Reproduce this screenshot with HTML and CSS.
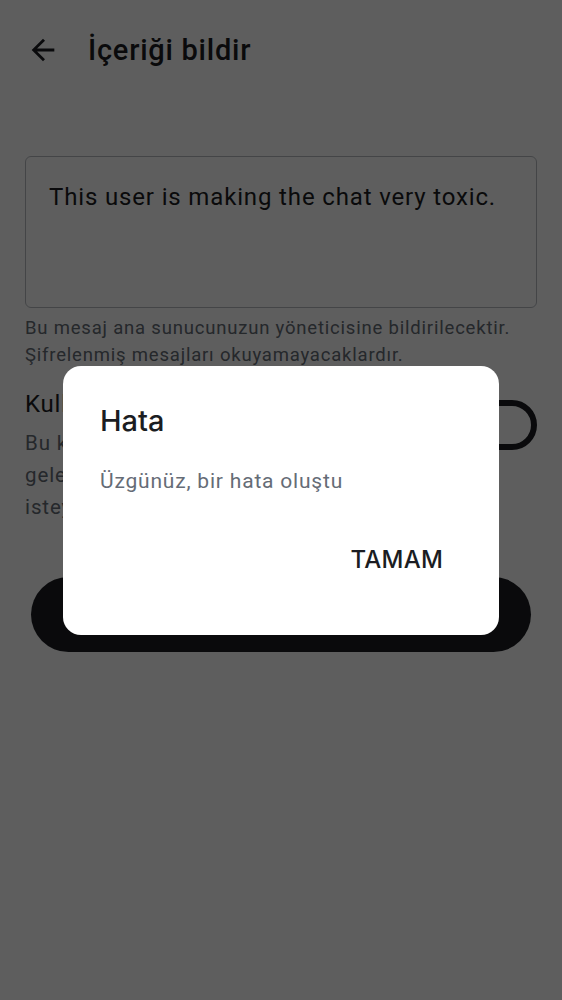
FILE: index.html
```html
<!DOCTYPE html>
<html lang="tr">
<head>
<meta charset="utf-8">
<title>İçeriği bildir</title>
<link rel="stylesheet" href="styles.css">
</head>
<body>
<div class="page">
  <header class="topbar">
    <svg class="back" viewBox="0 0 24 24" width="34" height="34" aria-hidden="true">
      <path d="M20 11H7.83l5.59-5.59L12 4l-8 8 8 8 1.41-1.41L7.83 13H20v-2z" fill="#1b1d22"/>
    </svg>
    <h1 class="title">İçeriği bildir</h1>
  </header>

  <div class="field">This user is making the chat very toxic.</div>
  <p class="helper">Bu mesaj ana sunucunuzun yöneticisine bildirilecektir.<br>Şifrelenmiş mesajları okuyamayacaklardır.</p>

  <div class="option">
    <div class="option-text">
      <div class="option-label">Kullanıcıyı engelle</div>
      <div class="option-desc">Bu kullanıcının tüm mevcut ve<br>gelecekteki mesajlarını gizlemek<br>isteyip istemediğinizi belirtin</div>
    </div>
    <div class="switch"><span class="thumb"></span></div>
  </div>

  <button class="send">Bildir</button>
</div>

<div class="overlay">
  <div class="dialog">
    <h2 class="dialog-title">Hata</h2>
    <p class="dialog-body">Üzgünüz, bir hata oluştu</p>
    <div class="dialog-actions">
      <button class="dialog-btn">TAMAM</button>
    </div>
  </div>
</div>
</body>
</html>
```

FILE: styles.css
```css
* { box-sizing: border-box; }

html, body {
  margin: 0;
  padding: 0;
  background: #ffffff;
  font-family: Roboto, "Noto Sans", sans-serif;
  color: #1b1d22;
}

.page {
  width: 562px;
  height: 1000px;
}

.topbar {
  height: 100px;
  display: flex;
  align-items: center;
  padding-left: 26px;
}

.back {
  display: block;
  flex: none;
}

.title {
  margin: 0 0 0 28px;
  font-size: 29px;
  font-weight: 500;
  line-height: 34px;
  letter-spacing: 0.75px;
}

.field {
  margin: 56px 25px 0;
  height: 152px;
  border: 1.5px solid #b8bcc2;
  border-radius: 6px;
  padding: 23px 0 0 23px;
  font-size: 24px;
  line-height: 34px;
  letter-spacing: 0.85px;
}

.helper {
  margin: 7px 0 0;
  padding-left: 25px;
  font-size: 18.5px;
  line-height: 27px;
  letter-spacing: 0.8px;
  color: #656c76;
}

.option {
  margin: 19px 25px 0;
  display: flex;
  justify-content: space-between;
  align-items: flex-start;
}

.option-label {
  font-size: 24px;
  line-height: 32px;
  letter-spacing: 0.8px;
}

.option-desc {
  margin-top: 7px;
  font-size: 20.5px;
  line-height: 32px;
  letter-spacing: 0.9px;
  color: #656c76;
}

.switch {
  margin-top: 12px;
  width: 81px;
  height: 50px;
  border: 6px solid #1b1d22;
  border-radius: 25px;
  display: flex;
  align-items: center;
  padding-left: 6px;
}

.thumb {
  width: 24px;
  height: 24px;
  border-radius: 50%;
  background: #1b1d22;
}

.send {
  display: block;
  margin: 54px 31px 0;
  width: 500px;
  height: 75px;
  border: 0;
  border-radius: 38px;
  background: #1b1d22;
  color: #ffffff;
  font-family: Inter, Roboto, sans-serif;
  font-size: 23px;
  font-weight: 500;
}

.overlay {
  position: fixed;
  inset: 0;
  background: rgba(0, 0, 0, 0.63);
  display: flex;
  align-items: center;
  justify-content: center;
}

.dialog {
  width: 436px;
  background: #ffffff;
  border-radius: 18px;
  padding: 37px 37px 61px;
}

.dialog-title {
  margin: 0;
  font-family: Inter, Roboto, sans-serif;
  font-size: 29px;
  font-weight: 500;
  line-height: 36px;
  color: #1b1d22;
}

.dialog-body {
  margin: 27px 0 0;
  font-family: Roboto, sans-serif;
  font-size: 21px;
  line-height: 30px;
  letter-spacing: 0.8px;
  color: #656c76;
}

.dialog-actions {
  margin-top: 50px;
  display: flex;
  justify-content: flex-end;
}

.dialog-btn {
  margin-right: 19px;
  padding: 0;
  border: 0;
  background: none;
  font-family: Inter, Roboto, sans-serif;
  font-size: 24px;
  font-weight: 500;
  line-height: 28px;
  letter-spacing: 0.2px;
  color: #1b1d22;
}
```
